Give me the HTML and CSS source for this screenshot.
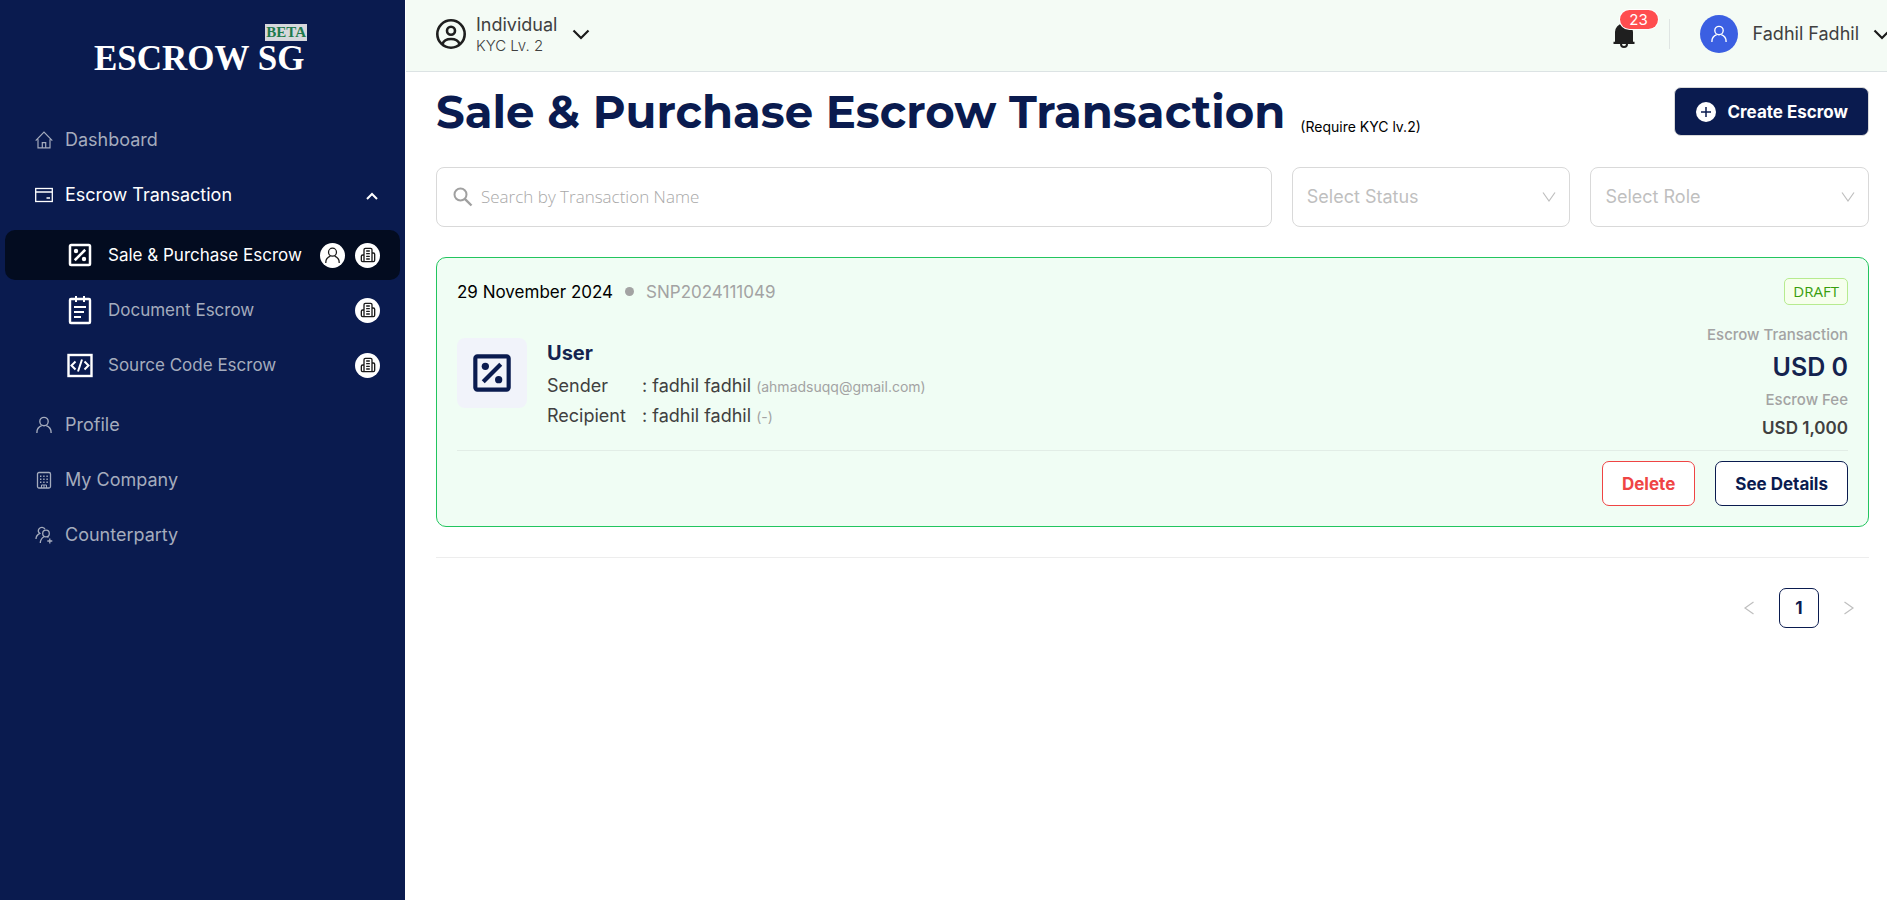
FILE: index.html
```html
<!DOCTYPE html>
<html lang="en">
<head>
<meta charset="utf-8">
<meta name="viewport" content="width=device-width, initial-scale=1">
<title>Sale &amp; Purchase Escrow Transaction</title>
<link rel="stylesheet" href="styles.css">
</head>
<body>
<svg class="sprite" aria-hidden="true">
  <symbol id="i-percent" viewBox="0 0 24 24">
    <rect x="4" y="4" width="16" height="16" rx="1" fill="none" stroke="currentColor" stroke-width="2"/>
    <path d="M7.8 16.2l8.4-8.4" stroke="currentColor" stroke-width="2"/>
    <circle cx="8.8" cy="8.8" r="1.75" fill="currentColor"/><circle cx="15.2" cy="15.2" r="1.75" fill="currentColor"/>
  </symbol>
  <symbol id="i-building" viewBox="0 0 24 24">
    <g fill="none" stroke="currentColor" stroke-width="2" stroke-linecap="round" stroke-linejoin="round">
      <path d="M6 22V4a2 2 0 0 1 2-2h8a2 2 0 0 1 2 2v18ZM6 12H4a2 2 0 0 0-2 2v6a2 2 0 0 0 2 2h2M18 9h2a2 2 0 0 1 2 2v9a2 2 0 0 1-2 2h-2M10 6h4M10 10h4M10 14h4M10 18h4"/>
    </g>
  </symbol>
  <symbol id="i-user" viewBox="0 0 18 18">
    <g fill="none" stroke="currentColor" stroke-width="1.350">
      <circle cx="9" cy="5.500" r="4.200"/><path d="M1.900 17v-.6c0-3 2-5.600 4.800-6.700M16.100 17v-.6c0-3-2-5.600-4.800-6.700"/>
    </g>
  </symbol>
  <symbol id="i-down" viewBox="0 0 18 18">
    <path d="M1.500 5.500l7.500 7.500 7.500-7.500" fill="none" stroke="currentColor" stroke-width="2.200"/>
  </symbol>
  <symbol id="i-thin" viewBox="0 0 14 14">
    <path d="M1 2.500l6 8.500 6-8.500" fill="none" stroke="currentColor" stroke-width="1.200"/>
  </symbol>
</svg>
<div class="app">
  <aside class="sidebar">
    <a class="logo" href="#"><span class="logo-beta">BETA</span><span class="logo-name">ESCROW SG</span></a>
    <nav class="menu" aria-label="Main">
      <a class="item" href="#">
        <svg class="icon" viewBox="0 0 18 18" fill="none" stroke="currentColor" stroke-width="1.200"><path d="M.7 9.600L9 1.200l8.300 8.400M3 8.200v8.600h12V8.200M7.300 16.600v-5h3.400v5"/></svg>
        <span>Dashboard</span>
      </a>
      <button class="item item-open" type="button" aria-expanded="true">
        <svg class="icon" viewBox="0 0 18 18" fill="none" stroke="currentColor" stroke-width="1.300"><rect x=".7" y="2.500" width="16.600" height="13"/><path d="M.7 6h16.600M11.500 12h3.500"/></svg>
        <span>Escrow Transaction</span>
        <svg class="caret" viewBox="0 0 12 8" fill="none" stroke="currentColor" stroke-width="2"><path d="M1 7l5-5 5 5"/></svg>
      </button>
      <div class="submenu">
        <a class="item sub active" href="#" aria-current="page">
          <svg class="sub-icon"><use href="#i-percent"/></svg>
          <span class="item-label">Sale &amp; Purchase Escrow</span>
          <span class="dot"><svg class="dot-user"><use href="#i-user"/></svg></span>
          <span class="dot"><svg class="dot-building"><use href="#i-building"/></svg></span>
        </a>
        <a class="item sub" href="#">
          <svg class="sub-icon" viewBox="0 0 30 30" fill="none" stroke="currentColor" stroke-width="2.400"><rect x="5" y="4" width="20" height="24" rx="1"/><path d="M11 1v6M19 1v6M9 12h12M9 17h10M9 22h7" stroke-width="2"/></svg>
          <span class="item-label">Document Escrow</span>
          <span class="dot"><svg class="dot-building"><use href="#i-building"/></svg></span>
        </a>
        <a class="item sub" href="#">
          <svg class="sub-icon" viewBox="0 0 30 30" fill="none" stroke="currentColor" stroke-width="2.400"><rect x="3.500" y="5" width="23" height="21"/><path d="M10.500 11.500L6.500 15.500l4 4M19.500 11.500l4 4-4 4M17 9.500l-4 12" stroke-width="2"/></svg>
          <span class="item-label">Source Code Escrow</span>
          <span class="dot"><svg class="dot-building"><use href="#i-building"/></svg></span>
        </a>
      </div>
      <a class="item" href="#"><svg class="icon"><use href="#i-user"/></svg><span>Profile</span></a>
      <a class="item" href="#">
        <svg class="icon" viewBox="0 0 18 18" fill="none" stroke="currentColor"><rect x="2.500" y="1.500" width="13" height="15.500" rx="1.500" stroke-width="1.300"/><path d="M5 5.200h8M5 8.200h8M5 11.200h8" stroke-width="1.400" stroke-dasharray="1.400 1.800"/><path d="M6.500 17v-3h5v3M9 14v3"/></svg>
        <span>My Company</span>
      </a>
      <a class="item" href="#">
        <svg class="icon" viewBox="0 0 18 18" fill="none" stroke="currentColor" stroke-width="1.300"><circle cx="11" cy="7.500" r="3.300"/><path d="M5.300 17c0-3 1.500-5 3.700-6.300M12.500 10.700l1 .7M14.800 12.500v5M12.300 15h5M10 3.300C9 .8 5.500.7 4 2.800c-1 1.600-.6 3.500.8 4.500C2.400 8.500 1 10.300 1 13"/></svg>
        <span>Counterparty</span>
      </a>
    </nav>
  </aside>
  <div class="main">
    <header class="topbar">
      <button class="account" type="button">
        <svg class="account-icon" viewBox="0 0 32 32" fill="none" stroke="currentColor" stroke-width="2.600"><circle cx="16" cy="16" r="13.700"/><circle cx="16" cy="12.800" r="4"/><path d="M7.500 26c1.200-3.400 4.500-5 8.500-5s7.300 1.600 8.500 5"/></svg>
        <span class="account-text"><span class="account-name">Individual</span><span class="account-level">KYC Lv. 2</span></span>
        <svg class="chevron"><use href="#i-down"/></svg>
      </button>
      <div class="tools">
        <button class="bell" type="button" aria-label="Notifications">
          <svg class="bell-icon" viewBox="0 0 24 28"><path d="M12 1a1.600 1.600 0 0 1 1.600 1.600v1A8.400 8.400 0 0 1 21 12v9.700h1.500v2.300h-21v-2.300H3V12a8.400 8.400 0 0 1 7.400-8.400v-1A1.600 1.600 0 0 1 12 1z" fill="currentColor"/><path d="M9 24a3 3 0 0 0 6 0" fill="none" stroke="currentColor" stroke-width="2"/></svg>
          <span class="bell-count">23</span>
        </button>
        <button class="profile" type="button">
          <span class="avatar"><svg class="icon"><use href="#i-user"/></svg></span>
          <span>Fadhil Fadhil</span>
          <svg class="chevron"><use href="#i-down"/></svg>
        </button>
      </div>
    </header>
    <main class="content">
      <div class="heading">
        <h1 class="title">Sale &amp; Purchase Escrow Transaction</h1>
        <span class="note">(Require KYC lv.2)</span>
        <button class="create" type="button">
          <svg class="create-icon" viewBox="0 0 20 20"><circle cx="10" cy="10" r="10" fill="#fff"/><path d="M10 5v10M5 10h10" stroke="#0a1b4f" stroke-width="1.500"/></svg>
          Create Escrow
        </button>
      </div>
      <form class="filters">
        <label class="field search">
          <svg class="search-icon" viewBox="0 0 20 20" fill="none" stroke="currentColor"><circle cx="7.500" cy="7.500" r="6" stroke-width="2"/><path d="M11.800 11.800l6.700 6.700" stroke-width="2.400"/></svg>
          <input class="search-input" type="search" aria-label="Search by Transaction Name" placeholder="Search by Transaction Name">
        </label>
        <label class="field picker">
          <select class="select" aria-label="Status"><option>Select Status</option></select>
          <svg class="thin"><use href="#i-thin"/></svg>
        </label>
        <label class="field picker">
          <select class="select" aria-label="Role"><option>Select Role</option></select>
          <svg class="thin"><use href="#i-thin"/></svg>
        </label>
      </form>
      <article class="card">
        <div class="card-top">
          <span class="date">29 November 2024</span><span class="bullet"></span><span class="code">SNP2024111049</span>
          <span class="tag">DRAFT</span>
        </div>
        <div class="card-body">
          <span class="tile"><svg class="tile-icon"><use href="#i-percent"/></svg></span>
          <div class="parties">
            <h2 class="role">User</h2>
            <dl class="people">
              <dt>Sender</dt><dd>: fadhil fadhil <span class="email">(ahmadsuqq@gmail.com)</span></dd>
              <dt>Recipient</dt><dd>: fadhil fadhil <span class="email">(-)</span></dd>
            </dl>
          </div>
          <div class="amounts">
            <span class="amount-label">Escrow Transaction</span>
            <strong class="amount">USD 0</strong>
            <span class="amount-label">Escrow Fee</span>
            <strong class="fee">USD 1,000</strong>
          </div>
        </div>
        <div class="actions">
          <button class="btn btn-delete" type="button">Delete</button>
          <button class="btn" type="button">See Details</button>
        </div>
      </article>
      <nav class="pages" aria-label="Pagination">
        <button class="page-arrow" type="button" aria-label="Previous page" disabled><svg class="thin turn-left"><use href="#i-thin"/></svg></button>
        <button class="page" type="button" aria-current="page">1</button>
        <button class="page-arrow" type="button" aria-label="Next page" disabled><svg class="thin turn-right"><use href="#i-thin"/></svg></button>
      </nav>
    </main>
  </div>
</div>
</body>
</html>
```

FILE: styles.css
```css
*, *::before, *::after { box-sizing: border-box; }
body { margin: 0; font: 400 17px/26px Inter, "Liberation Sans", sans-serif; color: #1f1f1f; background: #fff; }
button, input, select { font: inherit; color: inherit; }
button { border: 0; padding: 0; background: none; cursor: pointer; }
a { color: inherit; text-decoration: none; }
h1, h2, dl, dd { margin: 0; }
svg { flex: none; display: block; }
.sprite { position: absolute; width: 0; height: 0; }
.app { display: flex; min-height: 100vh; }

.sidebar { flex: none; width: 405px; background: #0a1b4f; color: #a5acbd; }
.logo { display: flex; flex-direction: column; width: 213px; height: 115px; margin-left: 94px; padding-top: 24px; color: #fff; font-family: "Liberation Serif", serif; font-weight: 700; }
.logo-beta { align-self: flex-end; padding: 0 1px; font-size: 15px; line-height: 17px; color: #1e7a4c; background: #d6d8dc; }
.logo-name { font-size: 35px; line-height: 36px; white-space: nowrap; }
.menu { display: flex; flex-direction: column; gap: 5px; padding: 0 5px; }
.submenu { display: flex; flex-direction: column; gap: 5px; margin: 5px 0; }
.item { display: flex; align-items: center; gap: 12px; width: 100%; height: 50px; padding: 0 20px 0 30px; border-radius: 10px; text-align: left; font-size: 18px; }
.item-open { color: #fff; }
.icon { width: 18px; height: 18px; }
.caret { width: 12px; height: 8px; margin: 2px 2px 0 auto; }
.sub { padding-left: 60px; gap: 10px; font-size: 17px; }
.sub-icon { width: 30px; height: 30px; margin-right: 3px; color: #fff; }
.item-label { flex: 1; min-width: 0; white-space: nowrap; }
.active { background: #030c20; color: #fff; }
.dot { display: grid; place-items: center; flex: none; width: 25px; height: 25px; border-radius: 50%; background: #fff; color: #1a1a1a; }
.dot-user { width: 17px; height: 17px; }
.dot-building { width: 16px; height: 16px; }

.main { flex: 1; min-width: 0; margin-left: 1px; overflow: hidden; }
.topbar { display: flex; justify-content: space-between; height: 72px; padding: 0 0 4px 30px; background: #f4fbf5; border-bottom: 1px solid #dce3e4; }
.account, .profile { display: flex; align-items: center; }
.account-icon { width: 32px; height: 32px; margin: 0 9px 0 -1px; }
.account-text { display: grid; text-align: left; color: #404040; margin: 2px 15px 0 0; }
.account-name { font-size: 18px; line-height: 22px; }
.account-level { font-size: 15px; line-height: 20px; font-weight: 300; }
.chevron { width: 18px; height: 18px; }
.tools { display: flex; align-items: center; margin-right: -4px; }
.bell { position: relative; padding-right: 33px; border-right: 1px solid #dfe5e3; height: 30px; }
.bell-icon { width: 24px; height: 28px; }
.bell-count { position: absolute; left: 8px; top: -9px; width: 38px; height: 19px; border-radius: 10px; background: #ff4d4f; color: #fff; font-size: 15px; line-height: 19px; box-shadow: 0 0 0 1px #fff; }
.profile { padding-left: 30px; color: #404040; font-size: 18px; }
.profile .chevron, .account .chevron { color: #1a1a1a; }
.avatar { display: grid; place-items: center; width: 38px; height: 38px; margin-right: 15px; border-radius: 50%; background: #3b5fe2; color: #fff; }
.profile .chevron { margin-left: 14px; }

.content { padding: 15px 18px 30px 30px; }
.heading { display: flex; align-items: center; height: 49px; }
.title { font: 700 45px/50px Montserrat, Inter, sans-serif; color: #0a1b4f; white-space: nowrap; }
.note { margin: 31px 0 0 15px; font-size: 14px; line-height: 20px; color: #000; white-space: nowrap; }
.create { display: flex; align-items: center; gap: 12px; height: 49px; margin-left: auto; padding: 0 20px 0 21px; border: 1px solid #d9d9d9; border-radius: 7px; background: #0a1b4f; color: #fff; font-weight: 700; white-space: nowrap; }
.create-icon { width: 20px; height: 20px; }
.filters { display: grid; grid-template-columns: 3fr 1fr 1fr; gap: 20px; margin: 31px 0 30px; }
.field { height: 60px; border: 1px solid #d9d9d9; border-radius: 8px; }
.search { display: flex; align-items: center; gap: 8px; padding: 0 16px; color: #a0a0a0; }
.search-icon { width: 20px; height: 20px; }
.search-input { flex: 1; min-width: 0; border: 0; padding: 0; outline: 0; background: none; font: 300 17px/26px "Open Sans", "Noto Sans", sans-serif; }
.search-input::placeholder { color: #a8a8a8; opacity: 1; }
.picker { display: grid; align-items: center; color: #bfbfbf; }
.picker > * { grid-area: 1 / 1; }
.select { appearance: none; width: 100%; height: 58px; padding: 0 14px; border: 0; outline: 0; background: none; font-size: 18px; }
.thin { width: 14px; height: 14px; }
.picker .thin { justify-self: end; margin-right: 13px; pointer-events: none; }

.card { padding: 20px; border: 1px solid #22c55e; border-radius: 10px; background: #f0fdf4; }
.card-top { display: flex; align-items: center; height: 27px; }
.date { color: #000; }
.bullet { width: 9px; height: 9px; margin: 0 12px; border-radius: 50%; background: #a3a3a3; }
.code { color: #a3a3a3; }
.tag { margin-left: auto; padding: 0 8px; border: 1px solid #b7eb8f; border-radius: 5px; background: #f6ffed; color: #389e0d; font: 400 15px/25px "Open Sans", "Noto Sans", sans-serif; }
.card-body { display: flex; padding: 18px 0 5px; border-bottom: 1px solid #e2ede6; }
.tile { display: grid; place-items: center; width: 70px; height: 70px; margin: 15px 20px 0 0; border-radius: 8px; background: #f1f3fa; color: #0a1b4f; }
.tile-icon { width: 50px; height: 50px; }
.parties { padding-top: 14px; color: #404040; }
.role { margin-bottom: 2px; font-size: 20px; line-height: 32px; font-weight: 700; color: #14234f; }
.people { display: grid; grid-template-columns: 95px auto; line-height: 30px; font-size: 18px; }
.people dt, .people dd { height: 30px; }
.email { color: #a3a3a3; font-size: 14px; }
.amounts { display: grid; align-content: start; margin-left: auto; text-align: right; }
.amount-label { color: #a3a3a3; font-size: 15px; line-height: 24px; font-weight: 500; }
.amount { color: #14234f; font-size: 25px; line-height: 41px; font-weight: 600; }
.fee { color: #404040; font-size: 17px; line-height: 33px; font-weight: 600; }
.actions { display: flex; justify-content: flex-end; gap: 20px; padding-top: 10px; }
.btn { height: 45px; padding: 0 19px; border: 1px solid #0a1b4f; border-radius: 7px; background: #fff; color: #0a1b4f; font-size: 17px; font-weight: 700; }
.btn-delete { border-color: #ef4444; color: #ef4444; }

.pages { display: flex; justify-content: flex-end; align-items: center; gap: 10px; margin-top: 30px; padding-top: 30px; border-top: 1px solid #ededed; }
.page { width: 40px; height: 40px; border: 1px solid #0a1b4f; border-radius: 7px; background: #fff; color: #0a1b4f; font-weight: 700; }
.page-arrow { display: grid; place-items: center; width: 40px; height: 40px; color: #bfbfbf; }
.turn-left { transform: rotate(90deg); }
.turn-right { transform: rotate(-90deg); }
```
